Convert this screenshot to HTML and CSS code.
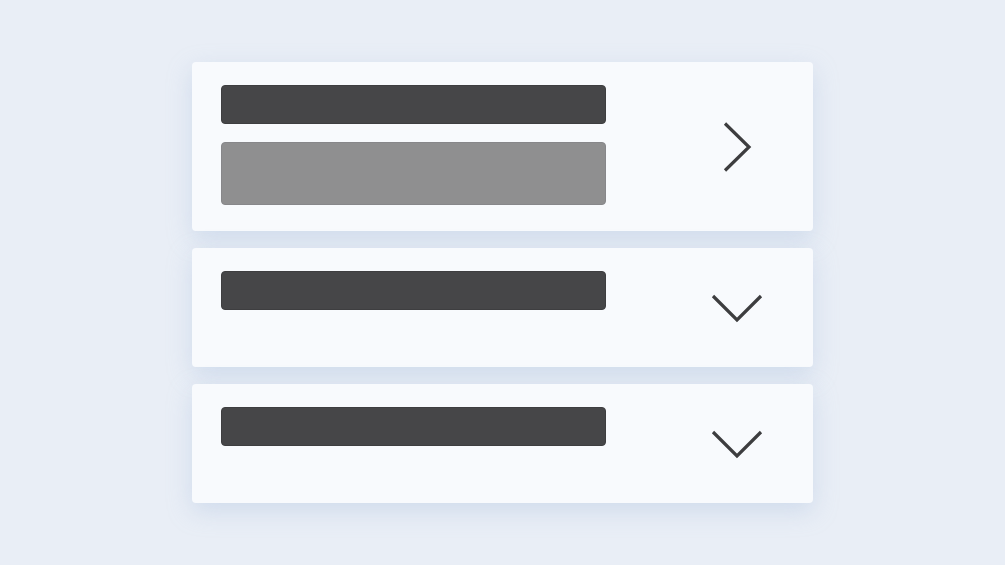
FILE: index.html
```html
<!DOCTYPE html>
<html>
<head>
<meta charset="utf-8">
<link rel="stylesheet" href="styles.css">
</head>
<body>
<div class="list">
  <div class="card card-open">
    <div class="bars">
      <div class="bar bar-title"></div>
      <div class="bar bar-body"></div>
    </div>
    <div class="icon">
      <svg width="52" height="52" viewBox="0 0 52 52"><polyline points="14,2.5 38,26 14,49.5" fill="none" stroke="#3d3d3f" stroke-width="3.2"/></svg>
    </div>
  </div>
  <div class="card">
    <div class="bars">
      <div class="bar bar-title"></div>
    </div>
    <div class="icon">
      <svg width="52" height="52" viewBox="0 0 52 52"><polyline points="2,14 26,38 50,14" fill="none" stroke="#3d3d3f" stroke-width="3.2"/></svg>
    </div>
  </div>
  <div class="card">
    <div class="bars">
      <div class="bar bar-title"></div>
    </div>
    <div class="icon">
      <svg width="52" height="52" viewBox="0 0 52 52"><polyline points="2,14 26,38 50,14" fill="none" stroke="#3d3d3f" stroke-width="3.2"/></svg>
    </div>
  </div>
</div>
</body>
</html>
```
FILE: styles.css
```css
html, body {
  margin: 0;
  padding: 0;
  background: #e9eef6;
  width: 1005px;
  height: 565px;
  overflow: hidden;
}
.list {
  display: flex;
  flex-direction: column;
  align-items: center;
  gap: 17px;
  padding-top: 62px;
}
.card {
  width: 621px;
  height: 119px;
  box-sizing: border-box;
  background: #f8fafd;
  border-radius: 4px;
  display: flex;
  box-shadow: 0 8px 24px rgba(160, 184, 218, 0.35);
}
.card-open {
  height: 169px;
}
.bars {
  display: flex;
  flex-direction: column;
  gap: 18px;
  padding: 23px 0 0 29px;
}
.bar {
  width: 385px;
  border-radius: 4px;
  box-sizing: border-box;
}
.bar-title {
  height: 39px;
  background: #464648;
  border: 1px solid #3e3e40;
}
.bar-body {
  height: 63px;
  background: #8f8f90;
  border: 1px solid #87878a;
}
.icon {
  align-self: center;
  margin-left: 105px;
  width: 52px;
  height: 52px;
}
.icon svg {
  display: block;
}
```
